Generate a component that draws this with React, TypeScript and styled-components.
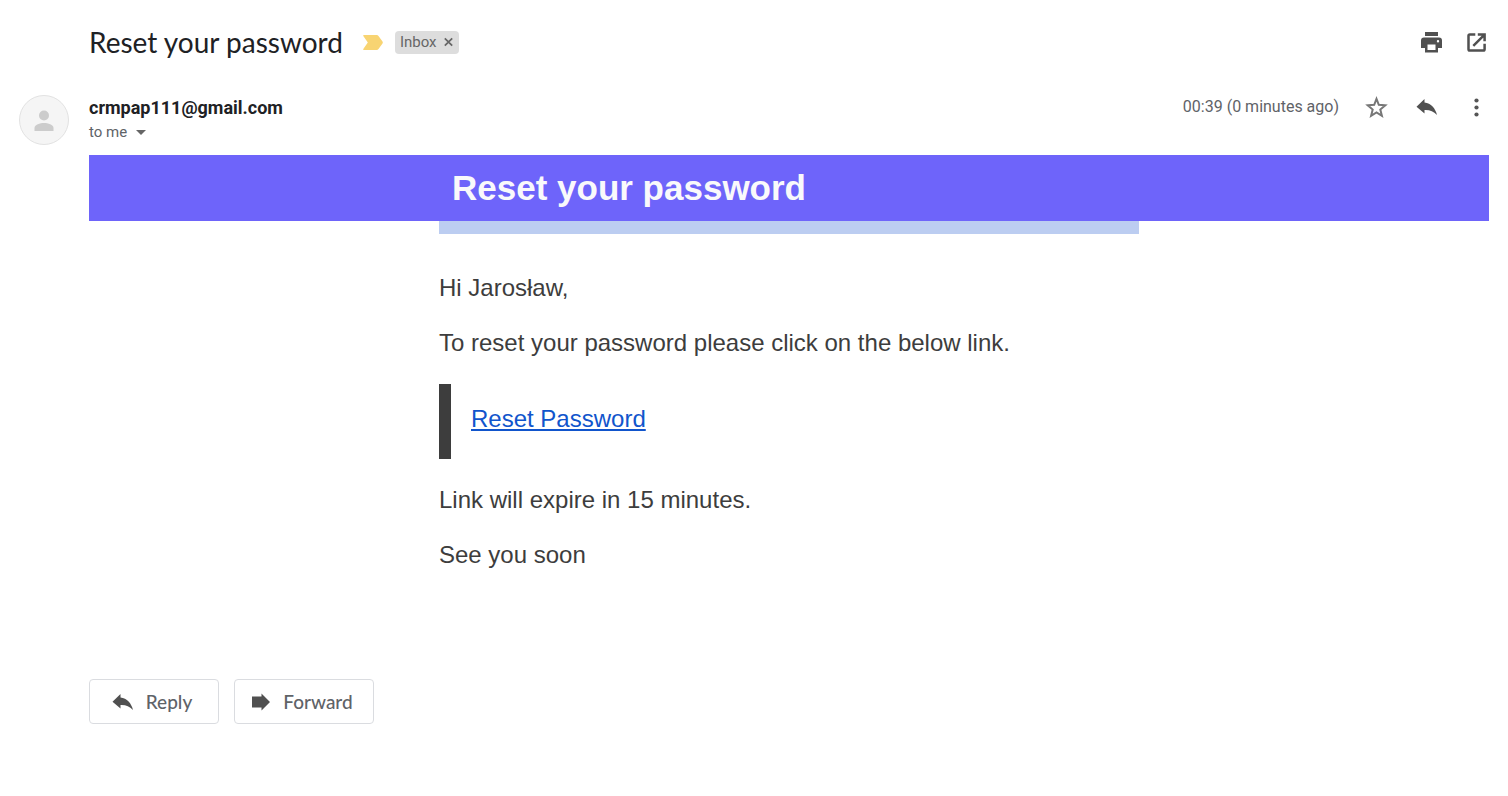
import React from "react";
import styled, { createGlobalStyle } from "styled-components";

const GlobalStyle = createGlobalStyle`
  *, *::before, *::after { box-sizing: border-box; }
  body {
    margin: 0;
    background: #ffffff;
    color: #202124;
    font-family: Roboto, "Liberation Sans", sans-serif;
  }
  h1, h2, p, blockquote { margin: 0; }
  button { font-family: inherit; cursor: pointer; }
`;

const Page = styled.main`
  padding: 24px 19px 72px;
`;

const SubjectRow = styled.header`
  display: flex;
  align-items: center;
  height: 36px;
  padding-left: 70px;
`;

const Subject = styled.h1`
  font-family: Lato, "Open Sans", sans-serif;
  font-size: 28px;
  font-weight: 400;
  line-height: 36px;
  color: #202124;
`;

const IconButton = styled.button`
  display: flex;
  align-items: center;
  justify-content: center;
  width: 24px;
  height: 24px;
  padding: 0;
  border: 0;
  background: transparent;
  color: #505050;
`;

const ImportanceButton = styled(IconButton)`
  margin-left: 18px;
`;

const Label = styled.span`
  display: flex;
  align-items: center;
  gap: 6px;
  height: 23px;
  margin-left: 10px;
  padding: 0 5px;
  border-radius: 4px;
  background: #dddddd;
  color: #666666;
  font-size: 15px;
  line-height: 23px;
`;

const LabelRemove = styled.button`
  display: flex;
  padding: 0;
  border: 0;
  background: transparent;
  color: #666666;
`;

const PageActions = styled.div`
  display: flex;
  gap: 21px;
  margin-left: auto;
`;

const SenderRow = styled.section`
  display: flex;
  align-items: flex-start;
  height: 60px;
  margin-top: 35px;
`;

const Avatar = styled.div`
  display: flex;
  align-items: center;
  justify-content: center;
  width: 50px;
  height: 50px;
  border: 1px solid #e2e2e2;
  border-radius: 50%;
  background: #f5f5f5;
`;

const SenderInfo = styled.div`
  margin-left: 20px;
`;

const SenderName = styled.h2`
  font-size: 18px;
  font-weight: 700;
  line-height: 25px;
`;

const Recipient = styled.button`
  display: flex;
  align-items: center;
  gap: 9px;
  padding: 0;
  border: 0;
  background: transparent;
  color: #5f6368;
  font-size: 15px;
  line-height: 24px;
`;

const MessageActions = styled.div`
  display: flex;
  align-items: center;
  gap: 26px;
  height: 24px;
  margin-left: auto;
`;

const Time = styled.time`
  color: #5f6368;
  font-size: 16px;
  line-height: 24px;
`;

const Message = styled.article`
  margin-left: 70px;
  color: #3d3d3d;
  font-family: "Liberation Sans", Arial, sans-serif;
`;

const Column = styled.div`
  width: 100%;
  max-width: 700px;
  margin: 0 auto;
`;

const Banner = styled.div`
  background: #6e64fa;
`;

const BannerTitle = styled.h2`
  padding: 12px 13px;
  color: #f9f9fb;
  font-size: 35px;
  font-weight: 700;
  line-height: 42px;
`;

const Accent = styled.div`
  height: 13px;
  background: #bccdf1;
`;

const Body = styled.div`
  display: flex;
  flex-direction: column;
  gap: 27px;
  padding: 40px 0 110px;
  font-size: 24px;
  line-height: 28px;
`;

const Quote = styled.blockquote`
  padding: 21px 20px 26px;
  border-left: 12px solid #3d3d3d;
`;

const ResetLink = styled.a`
  color: #1155cc;
  text-decoration: underline;
`;

const ReplyBar = styled.footer`
  display: flex;
  gap: 15px;
  padding-left: 70px;
`;

const ReplyButton = styled.button<{ $width: number }>`
  display: flex;
  align-items: center;
  justify-content: center;
  gap: 12px;
  width: ${({ $width }) => $width}px;
  height: 45px;
  padding: 0 4px 0 0;
  border: 1px solid #dadce0;
  border-radius: 4px;
  background: #ffffff;
  color: #5f6368;
  && { font-family: Lato, "Open Sans", sans-serif; }
  font-size: 19px;
  font-weight: 500;
  line-height: 24px;
`;

const ReplyIcon = () => (
  <svg width="22" height="20" viewBox="0 0 22 20" aria-hidden="true">
    <path d="M8.500 2 .5 9.800l8 6.700V13c5.200-.3 8.800 1.200 12.500 5C19.500 11.500 15 6 8.500 5.500Z" fill="#505050" />
  </svg>
);

const ForwardIcon = () => (
  <svg width="20" height="20" viewBox="0 0 20 20" aria-hidden="true">
    <path d="M1 4.500h9.500V1.500L19 10l-8.500 8.500v-3H1Z" fill="#505050" />
  </svg>
);

const App = () => (
  <>
    <GlobalStyle />
    <Page>
      <SubjectRow>
        <Subject>Reset your password</Subject>
        <ImportanceButton aria-label="Mark as important">
          <svg width="20" height="15" viewBox="0 0 20 15" aria-hidden="true">
            <path d="M.8 0h13q1 0 1.700.9l4 5.700q.6.900 0 1.800l-4 5.700q-.7.900-1.700.9H.8q-1 0-.5-.9L4.800 7.500.3.900Q-.2 0 .8 0Z" fill="#f8d472" />
          </svg>
        </ImportanceButton>
        <Label>
          Inbox
          <LabelRemove aria-label="Remove label Inbox">
            <svg width="11" height="10" viewBox="0 0 11 10" aria-hidden="true">
              <path d="m1.800 1.300 7.400 7.400m0-7.400-7.400 7.400" stroke="currentColor" strokeWidth="1.700" />
            </svg>
          </LabelRemove>
        </Label>
        <PageActions>
          <IconButton aria-label="Print">
            <svg width="24" height="24" viewBox="0.500 -0.500 24 24" fill="currentColor" aria-hidden="true">
              <path d="M5.500 1.500h13v4h-13ZM4.500 7h15a3 3 0 0 1 3 3v7.500h-4V22h-13v-4.500h-4V10a3 3 0 0 1 3-3ZM8 14v5.500h8V14Zm10.500-4.500a1.200 1.200 0 1 0 0 2.400 1.200 1.200 0 0 0 0-2.400Z" fillRule="evenodd" />
            </svg>
          </IconButton>
          <IconButton aria-label="Open in new window">
            <svg width="24" height="24" viewBox="0.700 -0.300 24 24" fill="none" stroke="currentColor" strokeWidth="2.500" aria-hidden="true">
              <path d="M11 4.200H5.500Q4.200 4.200 4.200 5.500v13.500q0 1.300 1.300 1.300H19q1.300 0 1.300-1.300v-5.500M13.500 4.200h6.800v6.800M20 4.500 9 15.500" />
            </svg>
          </IconButton>
        </PageActions>
      </SubjectRow>

      <SenderRow>
        <Avatar>
          <svg width="20" height="22" viewBox="0 -1 20 22" fill="#cccccc" aria-hidden="true">
            <circle cx="10" cy="5.500" r="5" />
            <path d="M.5 21v-3c0-3.500 5.500-5 9.500-5s9.500 1.500 9.500 5v3Z" />
          </svg>
        </Avatar>
        <SenderInfo>
          <SenderName>crmpap111@gmail.com</SenderName>
          <Recipient>
            to me
            <svg width="10" height="5" viewBox="0 0 10 5" aria-hidden="true">
              <path d="M0 0h10L5 5Z" fill="#666666" />
            </svg>
          </Recipient>
        </SenderInfo>
        <MessageActions>
          <Time>00:39 (0 minutes ago)</Time>
          <IconButton aria-label="Not starred">
            <svg width="24" height="24" viewBox="0.500 -0.300 24 24" aria-hidden="true">
              <path d="m12 3.500 2.300 6 6.500.5-5 4.200 1.600 6.300-5.400-3.400-5.400 3.400 1.600-6.300-5-4.200 6.500-.5Z" fill="none" stroke="#777777" strokeWidth="2" />
            </svg>
          </IconButton>
          <IconButton aria-label="Reply">
            <ReplyIcon />
          </IconButton>
          <IconButton aria-label="More">
            <svg width="24" height="24" viewBox="0.500 -0.500 24 24" fill="#555555" aria-hidden="true">
              <circle cx="12" cy="5" r="2.100" />
              <circle cx="12" cy="12" r="2.100" />
              <circle cx="12" cy="19" r="2.100" />
            </svg>
          </IconButton>
        </MessageActions>
      </SenderRow>

      <Message>
        <Banner>
          <Column>
            <BannerTitle>Reset your password</BannerTitle>
          </Column>
        </Banner>
        <Column>
          <Accent />
          <Body>
            <p>Hi Jarosław,</p>
            <p>To reset your password please click on the below link.</p>
            <Quote>
              <ResetLink href="#reset">Reset Password</ResetLink>
            </Quote>
            <p>Link will expire in 15 minutes.</p>
            <p>See you soon</p>
          </Body>
        </Column>
      </Message>

      <ReplyBar>
        <ReplyButton $width={130}>
          <ReplyIcon />
          Reply
        </ReplyButton>
        <ReplyButton $width={140}>
          <ForwardIcon />
          Forward
        </ReplyButton>
      </ReplyBar>
    </Page>
  </>
);

export default App;
